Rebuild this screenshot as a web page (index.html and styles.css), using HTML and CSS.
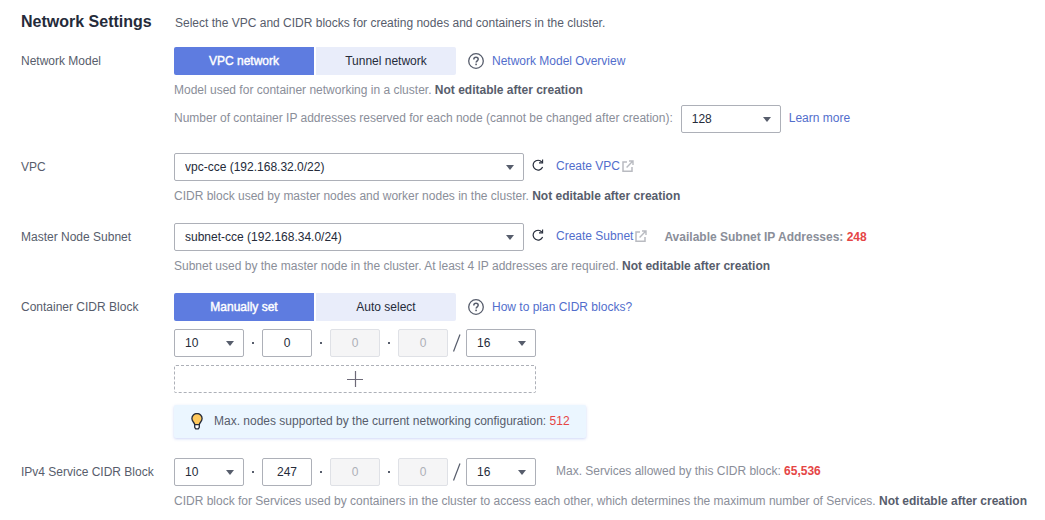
FILE: index.html
```html
<!DOCTYPE html>
<html lang="en">
<head>
    <meta charset="UTF-8">
    <meta name="viewport" content="width=device-width, initial-scale=1.0">
    <title>Network Settings</title>
    <link rel="stylesheet" href="styles.css">
</head>
<body>
    <!-- shared icons -->
    <svg class="sprite" width="0" height="0" aria-hidden="true">
        <symbol id="icon-help" viewBox="0 0 16 16">
            <circle cx="8" cy="8" r="7.3" fill="none" stroke="#575d6c" stroke-width="1.3"/>
            <path d="M5.8 6.4C5.8 5 6.7 4.2 8 4.2s2.2.8 2.2 2c0 1.6-2.1 1.7-2.1 3.4" fill="none" stroke="#575d6c" stroke-width="1.5"/>
            <rect x="7.3" y="10.6" width="1.6" height="1.6" fill="#575d6c"/>
        </symbol>
        <symbol id="icon-refresh" viewBox="0 0 12 12">
            <path d="M9.8 3A4.9 4.9 0 1 0 10.6 8" fill="none" stroke="#252b3a" stroke-width="1.2"/>
            <path d="M10.6 0.4V3.9H7" fill="none" stroke="#252b3a" stroke-width="1.1"/>
        </symbol>
        <symbol id="icon-external" viewBox="0 0 12 12">
            <path d="M5 2H1V11.2H10V7" fill="none" stroke="#b9bbc1" stroke-width="1.5"/>
            <path d="M4.6 7.4L10.4 1.4M7 1H11V5" fill="none" stroke="#b9bbc1" stroke-width="1.4"/>
        </symbol>
    </svg>

    <form class="settings">
        <header class="settings-header">
            <h2>Network Settings</h2>
            <p>Select the VPC and CIDR blocks for creating nodes and containers in the cluster.</p>
        </header>

        <div class="row">
            <div class="row-label">Network Model</div>
            <div class="row-content">
                <div class="line">
                    <div class="segment">
                        <button type="button" class="active">VPC network</button>
                        <button type="button">Tunnel network</button>
                    </div>
                    <svg class="help"><use href="#icon-help"/></svg>
                    <a href="#">Network Model Overview</a>
                </div>
                <p class="hint">Model used for container networking in a cluster. <strong>Not editable after creation</strong></p>
                <div class="line reserved">
                    <label for="ip-count" class="inline-text">Number of container IP addresses reserved for each node (cannot be changed after creation):</label>
                    <div class="select medium">
                        <select id="ip-count"><option>128</option></select>
                    </div>
                    <a href="#" class="inline-text">Learn more</a>
                </div>
            </div>
        </div>

        <div class="row">
            <label class="row-label" for="vpc">VPC</label>
            <div class="row-content">
                <div class="line">
                    <div class="select large">
                        <select id="vpc"><option>vpc-cce (192.168.32.0/22)</option></select>
                    </div>
                    <button type="button" class="refresh" aria-label="Refresh"><svg><use href="#icon-refresh"/></svg></button>
                    <a href="#" class="inline-text external">Create VPC<svg><use href="#icon-external"/></svg></a>
                </div>
                <p class="hint">CIDR block used by master nodes and worker nodes in the cluster. <strong>Not editable after creation</strong></p>
            </div>
        </div>

        <div class="row">
            <label class="row-label" for="subnet">Master Node Subnet</label>
            <div class="row-content">
                <div class="line">
                    <div class="select large">
                        <select id="subnet"><option>subnet-cce (192.168.34.0/24)</option></select>
                    </div>
                    <button type="button" class="refresh" aria-label="Refresh"><svg><use href="#icon-refresh"/></svg></button>
                    <a href="#" class="inline-text external">Create Subnet<svg><use href="#icon-external"/></svg></a>
                    <span class="available">Available Subnet IP Addresses: <span class="count">248</span></span>
                </div>
                <p class="hint">Subnet used by the master node in the cluster. At least 4 IP addresses are required. <strong>Not editable after creation</strong></p>
            </div>
        </div>

        <div class="row">
            <div class="row-label">Container CIDR Block</div>
            <div class="row-content">
                <div class="line">
                    <div class="segment">
                        <button type="button" class="active">Manually set</button>
                        <button type="button">Auto select</button>
                    </div>
                    <svg class="help"><use href="#icon-help"/></svg>
                    <a href="#">How to plan CIDR blocks?</a>
                </div>
                <div class="cidr">
                    <div class="select small">
                        <select aria-label="Container block, first part"><option>10</option></select>
                    </div>
                    <span class="sep dot"></span>
                    <input type="text" value="0" aria-label="Container block, second part">
                    <span class="sep dot"></span>
                    <input type="text" value="0" aria-label="Container block, third part" disabled>
                    <span class="sep dot"></span>
                    <input type="text" value="0" aria-label="Container block, fourth part" disabled>
                    <svg class="sep" viewBox="0 0 18 28"><path d="M5.5 22.5L12 5.5" stroke="#575d6c" stroke-width="1.2"/></svg>
                    <div class="select small">
                        <select aria-label="Container block mask"><option>16</option></select>
                    </div>
                </div>
                <button type="button" class="add" aria-label="Add CIDR block">
                    <svg viewBox="0 0 16 16"><path d="M0 8.5H16M8.5 0V16" stroke="#6d6a78" stroke-width="1.2"/></svg>
                </button>
                <div class="tip">
                    <svg viewBox="0 0 12 17">
                        <path d="M3.7 11.7C3.7 9.6 .9 8.6 .9 5.6a5.1 5.1 0 0 1 10.2 0c0 3-2.8 4-2.8 6.1z" fill="#ffc95c" stroke="#252b3a" stroke-width="1.3"/>
                        <path d="M3.7 11.7V14.3L4.7 15.8H7.3L8.3 14.3V11.7z" fill="#fff" stroke="#252b3a" stroke-width="1.3"/>
                    </svg>
                    <span>Max. nodes supported by the current networking configuration: <span class="count">512</span></span>
                </div>
            </div>
        </div>

        <div class="row">
            <div class="row-label">IPv4 Service CIDR Block</div>
            <div class="row-content">
                <div class="line">
                    <div class="cidr">
                        <div class="select small">
                            <select aria-label="Service block, first part"><option>10</option></select>
                        </div>
                        <span class="sep dot"></span>
                        <input type="text" value="247" aria-label="Service block, second part">
                        <span class="sep dot"></span>
                        <input type="text" value="0" aria-label="Service block, third part" disabled>
                        <span class="sep dot"></span>
                        <input type="text" value="0" aria-label="Service block, fourth part" disabled>
                        <svg class="sep" viewBox="0 0 18 28"><path d="M5.5 22.5L12 5.5" stroke="#575d6c" stroke-width="1.2"/></svg>
                        <div class="select small">
                            <select aria-label="Service block mask"><option>16</option></select>
                        </div>
                    </div>
                    <span class="inline-text services">Max. Services allowed by this CIDR block: <strong class="count">65,536</strong></span>
                </div>
                <p class="hint">CIDR block for Services used by containers in the cluster to access each other, which determines the maximum number of Services. <strong>Not editable after creation</strong></p>
            </div>
        </div>
    </form>
</body>
</html>
```
FILE: styles.css
```css
* {
    box-sizing: border-box;
}
body {
    margin: 0;
    background-color: #fff;
    color: #575d6c;
    font-family: "Liberation Sans", Arial, sans-serif;
    font-size: 12px;
    line-height: 18px;
}
h2, p {
    margin: 0;
}
a {
    color: #526ecc;
    text-decoration: none;
}
a:hover {
    text-decoration: underline;
}
button, input, select {
    font: inherit;
    color: #252b3a;
}
button {
    padding: 0;
    border: none;
    background: none;
    cursor: pointer;
}
svg {
    display: block;
    flex: none;
}
.sprite {
    position: absolute;
}
.settings {
    padding: 13px 16px 0 21px;
}
.settings-header {
    display: flex;
    align-items: center;
    margin-bottom: 16px;
}
.settings-header h2 {
    width: 154px;
    color: #252b3a;
    font-size: 16px;
    line-height: 18px;
}
.settings-header p {
    padding-top: 2px;
    line-height: 16px;
}

/* Rows */
.row {
    display: flex;
    margin-bottom: 18px;
}
.row:last-child {
    margin-bottom: 0;
}
.row-label {
    flex: none;
    width: 153px;
    line-height: 28px;
}
.row-content {
    flex: 1;
    min-width: 0;
}
.line {
    display: flex;
    align-items: center;
}
.hint {
    margin-top: 6px;
    color: #8a8e99;
}
.hint strong {
    color: #575d6c;
}
.inline-text {
    align-self: flex-start;
    line-height: 26px;
}
.reserved {
    gap: 8px;
    margin-top: 6px;
    padding-bottom: 2px;
    color: #8a8e99;
}
.count {
    color: #e54545;
}

/* Segmented buttons */
.segment {
    display: flex;
    gap: 2px;
}
.segment button {
    width: 140px;
    height: 28px;
    background-color: #e9edfa;
    border-radius: 0 2px 2px 0;
}
.segment .active {
    background-color: #5e7ce0;
    border-radius: 2px 0 0 2px;
    color: #fff;
    -webkit-text-stroke: 0.4px #fff;
}
.help {
    width: 16px;
    height: 16px;
    margin: 0 8px 0 12px;
}

/* Drop-downs and inputs */
.select {
    position: relative;
    flex: none;
}
.select::after {
    content: "";
    position: absolute;
    top: 12px;
    right: 10px;
    border: 4px solid transparent;
    border-top: 5px solid #575d6c;
    border-bottom: none;
    pointer-events: none;
}
.select select {
    display: block;
    width: 100%;
    height: 28px;
    padding: 0 24px 0 10px;
    appearance: none;
    background-color: #fff;
    border: 1px solid #adb0b8;
    border-radius: 2px;
}
.small {
    width: 70px;
}
.medium {
    width: 100px;
}
.large {
    width: 350px;
}
.refresh {
    margin: 0 12px 4px 8px;
}
.refresh svg {
    width: 12px;
    height: 12px;
}
.external {
    display: flex;
    align-items: center;
    gap: 2px;
}
.external svg {
    width: 12px;
    height: 12px;
}
.available {
    margin-left: 17px;
    color: #8a8e99;
    font-weight: bold;
}
.cidr {
    display: flex;
    align-items: center;
}
.segment, .cidr, .add {
    flex: none;
}
.line + .cidr {
    margin-top: 8px;
}
.cidr input {
    width: 50px;
    height: 28px;
    padding: 0;
    border: 1px solid #adb0b8;
    border-radius: 2px;
    text-align: center;
}
.cidr input:disabled {
    background-color: #f5f5f6;
    border-color: #dfe1e6;
    color: #adb0b8;
}
.sep {
    width: 18px;
    height: 28px;
}
.dot::before {
    content: "";
    display: block;
    width: 2px;
    height: 2px;
    margin: 13px auto;
    background-color: #575d6c;
}
.add {
    display: flex;
    align-items: center;
    justify-content: center;
    width: 362px;
    height: 28px;
    margin-top: 8px;
    border: 1px dashed #adb0b8;
    border-radius: 2px;
}
.add svg {
    width: 16px;
    height: 16px;
}
.tip {
    display: flex;
    align-items: center;
    gap: 11px;
    width: fit-content;
    margin: 12px 0 2px;
    padding: 7px 16px 8px 17px;
    background-color: #ebf6ff;
    border-radius: 2px;
    box-shadow: 0 1px 3px rgba(94, 124, 224, 0.3);
}
.tip svg {
    width: 12px;
    height: 17px;
}
.services {
    margin-left: 20px;
    color: #8a8e99;
}
```
